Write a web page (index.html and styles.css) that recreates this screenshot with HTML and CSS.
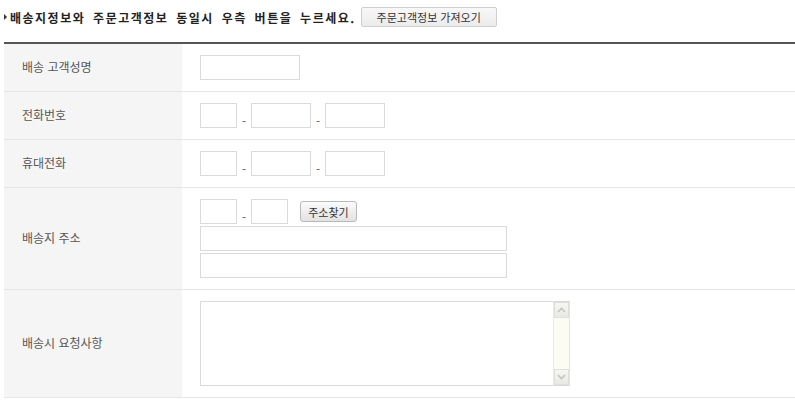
FILE: index.html
```html
<!DOCTYPE html>
<html lang="ko">
<head>
    <meta charset="UTF-8">
    <title>배송지 정보</title>
    <link rel="stylesheet" href="styles.css">
</head>
<body>

<div class="guide">
    <span class="bullet"></span>
    <strong class="guide-text">배송지정보와 주문고객정보 동일시 우측 버튼을 누르세요.</strong>
    <button type="button" class="btn btn-copy">주문고객정보 가져오기</button>
</div>

<table class="order-form">
    <tr>
        <th>배송 고객성명</th>
        <td>
            <div class="field"><input type="text" class="w100"></div>
        </td>
    </tr>
    <tr>
        <th>전화번호</th>
        <td>
            <div class="field">
                <input type="text" class="w37"><span class="dash">-</span><input type="text" class="w60"><span class="dash">-</span><input type="text" class="w60">
            </div>
        </td>
    </tr>
    <tr>
        <th>휴대전화</th>
        <td>
            <div class="field">
                <input type="text" class="w37"><span class="dash">-</span><input type="text" class="w60"><span class="dash">-</span><input type="text" class="w60">
            </div>
        </td>
    </tr>
    <tr>
        <th>배송지 주소</th>
        <td>
            <div class="addr">
                <div class="field">
                    <input type="text" class="w37"><span class="dash">-</span><input type="text" class="w37">
                    <button type="button" class="btn btn-zip">주소찾기</button>
                </div>
                <input type="text" class="w307">
                <input type="text" class="w307">
            </div>
        </td>
    </tr>
    <tr>
        <th>배송시 요청사항</th>
        <td>
            <div class="memo">
                <textarea></textarea>
                <div class="scrollbar">
                    <span class="sb-btn">
                        <svg width="9" height="6" viewBox="0 0 9 6"><polyline points="1,5 4.5,1.5 8,5" fill="none" stroke="#c4c4c0" stroke-width="1.6"/></svg>
                    </span>
                    <span class="sb-btn">
                        <svg width="9" height="6" viewBox="0 0 9 6"><polyline points="1,1 4.5,4.5 8,1" fill="none" stroke="#c4c4c0" stroke-width="1.6"/></svg>
                    </span>
                </div>
            </div>
        </td>
    </tr>
</table>

</body>
</html>
```

FILE: styles.css
```css
body {
    margin: 0;
    font-family: "Noto Sans CJK KR", "Noto Sans", sans-serif;
    font-size: 12px;
    color: #555;
    background-color: #ffffff;
}

/* 안내 문구 */
.guide {
    display: flex;
    align-items: center;
    padding: 7px 0 15px 4px;
}

.bullet {
    width: 0;
    height: 0;
    border-left: 3px solid #333;
    border-top: 3px solid transparent;
    border-bottom: 3px solid transparent;
    margin-right: 3px;
}

.guide-text {
    color: #222;
    font-size: 12px;
    letter-spacing: 1.5px;
    word-spacing: 3px;
}

.btn {
    font-family: inherit;
    font-size: 11px;
    color: #333;
    padding: 0;
    cursor: pointer;
    box-sizing: border-box;
}

.btn-copy {
    width: 136px;
    height: 20px;
    margin-left: 5px;
    background: linear-gradient(#f8f8f8, #ebebeb);
    border: 1px solid #cfcfcf;
    border-radius: 2px;
}

.btn-zip {
    width: 57px;
    height: 21px;
    margin-left: 12px;
    background: linear-gradient(#fbfbfb, #e2e2e2);
    border: 1px solid #b9b9b9;
    border-radius: 3px;
}

/* 입력 테이블 */
.order-form {
    margin-left: 4px;
    width: 791px;
    table-layout: fixed;
    border-collapse: separate;
    border-spacing: 0;
    border-top: 2px solid #555;
}

.order-form th {
    width: 160px;
    padding: 0 0 2px 18px;
    background-color: #f5f5f5;
    font-weight: normal;
    text-align: left;
    color: #555;
    border-bottom: 1px solid #e6e6e6;
}

.order-form td {
    padding: 11px 0 11px 18px;
    border-bottom: 1px solid #e6e6e6;
}

.field {
    display: flex;
    align-items: center;
    height: 25px;
}

.addr {
    display: flex;
    flex-direction: column;
    gap: 2px;
}

input {
    box-sizing: border-box;
    height: 25px;
    border: 1px solid #dadada;
    margin: 0;
    padding: 0 4px;
    font-family: inherit;
    font-size: 12px;
}

.w37 { width: 37px; }
.w60 { width: 60px; }
.w100 { width: 100px; }
.w307 { width: 307px; }

.dash {
    width: 14px;
    height: 25px;
    text-align: center;
    color: #666;
    line-height: 1;
    padding-top: 12px;
    box-sizing: border-box;
}

/* 요청사항 */
.memo {
    display: flex;
    width: 370px;
    height: 85px;
    box-sizing: border-box;
    border: 1px solid #dadada;
    border-right: 0;
}

.memo textarea {
    flex: 1;
    border: 0;
    resize: none;
    outline: none;
    margin: 0;
    padding: 2px;
}

.scrollbar {
    width: 17px;
    display: flex;
    flex-direction: column;
    justify-content: space-between;
    background-color: #fcfcf4;
    border-left: 1px solid #ecece6;
    border-right: 1px solid #e4e4de;
    box-sizing: border-box;
}

.sb-btn {
    height: 16px;
    display: flex;
    align-items: center;
    justify-content: center;
    background: linear-gradient(#f6f6f2, #e9e9e4);
    border: 1px solid #dfdfda;
    box-sizing: border-box;
}
```
